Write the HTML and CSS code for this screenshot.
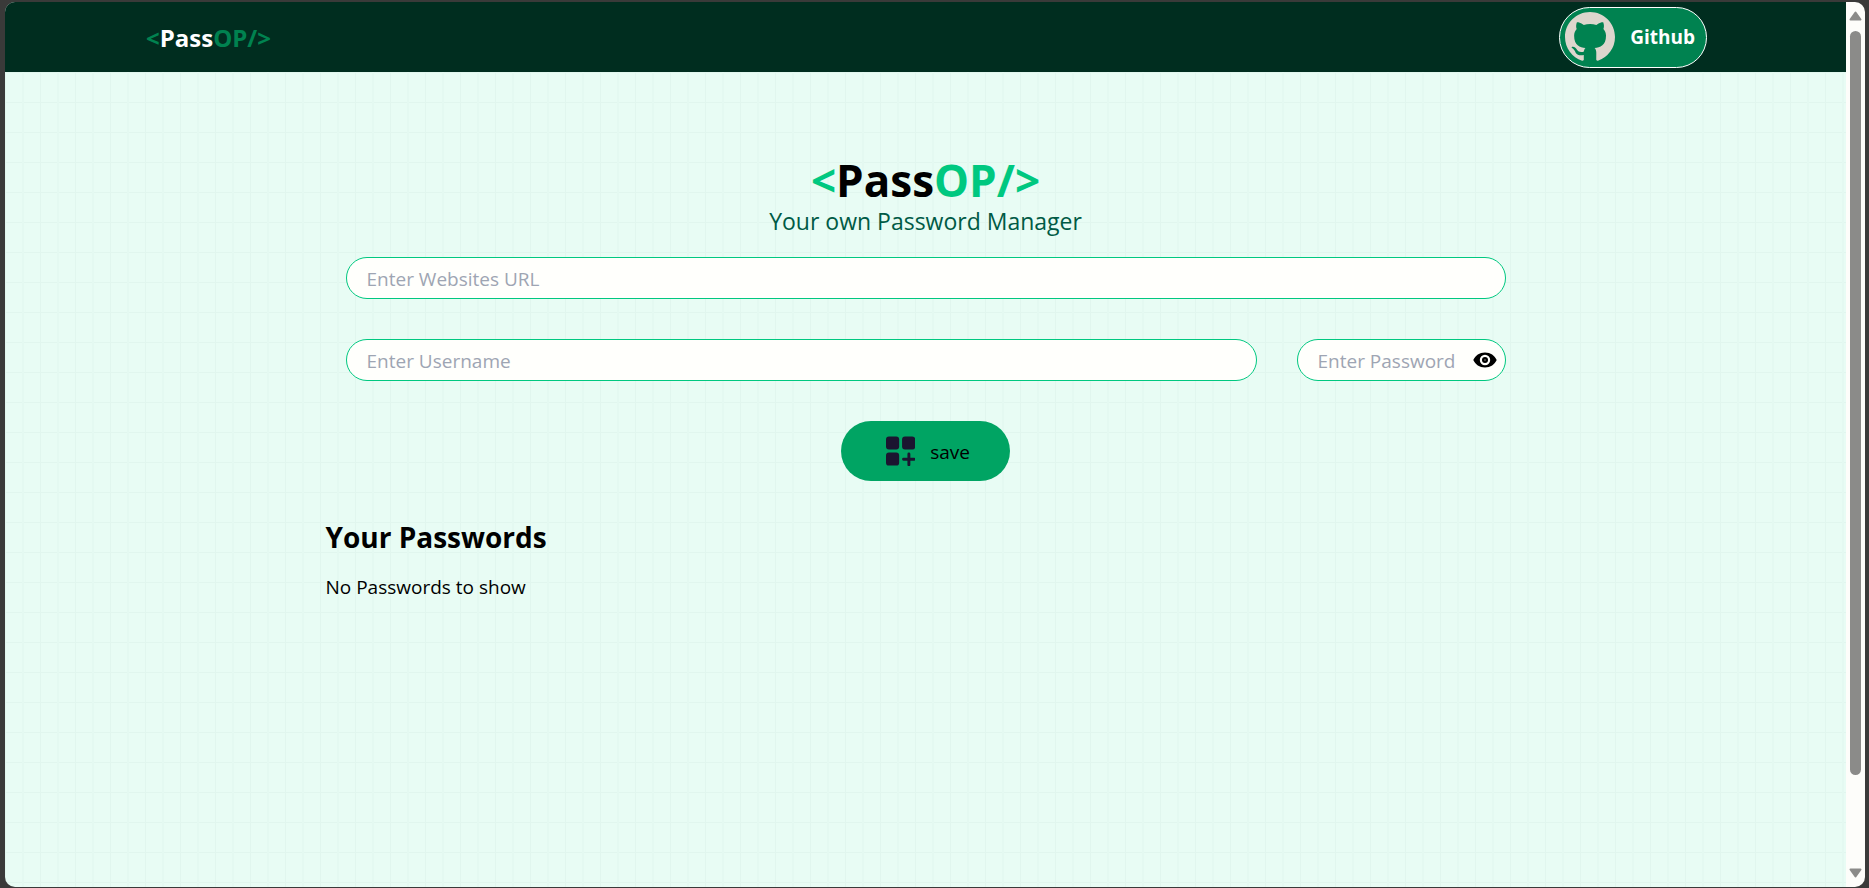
FILE: index.html
```html
<!DOCTYPE html>
<html lang="en">
<head>
<meta charset="utf-8">
<meta name="viewport" content="width=device-width, initial-scale=1">
<title>PassOP</title>
<link rel="stylesheet" href="styles.css">
</head>
<body>
<div class="window">
  <div class="page">
    <nav class="navbar">
      <div class="logo"><span class="accent">&lt;</span>Pass<span class="accent">OP/&gt;</span></div>
      <button class="github" type="button">
        <svg class="github-icon" viewBox="0 0 16 16" aria-hidden="true"><path d="M8 0C3.58 0 0 3.58 0 8c0 3.54 2.29 6.53 5.47 7.59.4.07.55-.17.55-.38 0-.19-.01-.82-.01-1.49-2.01.37-2.53-.49-2.69-.94-.09-.23-.48-.94-.82-1.13-.28-.15-.68-.52-.01-.53.63-.01 1.08.58 1.23.82.72 1.21 1.87.87 2.33.66.07-.52.28-.87.51-1.07-1.78-.2-3.64-.89-3.64-3.95 0-.87.31-1.59.82-2.15-.08-.2-.36-1.02.08-2.12 0 0 .67-.21 2.2.82.64-.18 1.32-.27 2-.27s1.36.09 2 .27c1.53-1.04 2.2-.82 2.2-.82.44 1.1.16 1.92.08 2.12.51.56.82 1.27.82 2.15 0 3.07-1.87 3.75-3.65 3.95.29.25.54.73.54 1.48 0 1.07-.01 1.93-.01 2.2 0 .21.15.46.55.38A8.01 8.01 0 0016 8c0-4.42-3.58-8-8-8z"/></svg>
        <span>Github</span>
      </button>
    </nav>
    <main class="content">
      <h1 class="title"><span class="accent">&lt;</span>Pass<span class="accent">OP/&gt;</span></h1>
      <p class="subtitle">Your own Password Manager</p>
      <form class="form">
        <input class="field" type="text" placeholder="Enter Websites URL" aria-label="Website URL">
        <div class="row">
          <input class="field" type="text" placeholder="Enter Username" aria-label="Username">
          <div class="password">
            <input class="field" type="password" placeholder="Enter Password" aria-label="Password">
            <button class="toggle" type="button" aria-label="Show password">
              <svg viewBox="0 0 24 16" aria-hidden="true"><path fill-rule="evenodd" d="M12 .5C6.500 .5 2.300 3.500 .3 8c2 4.500 6.200 7.500 11.700 7.500S21.700 12.500 23.700 8C21.700 3.500 17.500 .5 12 .5zM12 2.800a5.200 5.200 0 1 1 0 10.400a5.200 5.200 0 0 1 0-10.400z"/><circle cx="12" cy="8" r="3"/><circle cx="12" cy="8" r="0.700" fill="#aaa"/></svg>
            </button>
          </div>
        </div>
        <button class="save" type="button">
          <svg class="save-icon" viewBox="0 0 30 30" aria-hidden="true"><rect width="13.500" height="13.500" rx="3"/><rect x="16.500" width="13.500" height="13.500" rx="3"/><rect y="16.500" width="13.500" height="13.500" rx="3"/><path d="M23.500 18v11M18 23.500h11" stroke-width="3" stroke-linecap="round"/></svg>
          <span>save</span>
        </button>
      </form>
      <section>
        <h2 class="heading">Your Passwords</h2>
        <p class="empty">No Passwords to show</p>
      </section>
    </main>
  </div>
  <div class="scrollbar" aria-hidden="true">
    <svg class="arrow" viewBox="0 0 13 10"><path d="M6.500 1.500L11.500 8.500h-10z"/></svg>
    <div class="track"><div class="thumb"></div></div>
    <svg class="arrow" viewBox="0 0 13 10"><path d="M6.500 8.500L11.500 1.500h-10z"/></svg>
  </div>
</div>
</body>
</html>
```
FILE: styles.css
```css
* { box-sizing: border-box; }

body {
  margin: 0;
  background: #3a3a39;
  color: #000;
  font: 19px/30px "Open Sans", "Noto Sans", sans-serif;
}

button, input { font: inherit; }
h1, h2, p { margin: 0; }

.window {
  display: grid;
  grid-template-columns: 1fr 19px;
  height: 100vh;
  padding: 2px 4px 1px 5px;
}

.page {
  overflow: hidden;
  border-radius: 10px 0 0 10px;
  background-color: #e8fcf4;
  background-image:
    linear-gradient(to right, #e1f6ee 1px, transparent 1px, transparent 17px, #e4f9f1 17px, #e4f9f1 19px, transparent 19px),
    linear-gradient(to bottom, #e1f6ee 1px, transparent 1px);
  background-size: 35px 30px;
  background-position: 0 10px;
}

.navbar {
  display: flex;
  align-items: center;
  justify-content: space-between;
  height: 70px;
  padding: 0 139px 0 141px;
  background: #002d1f;
}

.logo {
  padding-top: 2px;
  color: #fff;
  font-size: 24px;
  font-weight: 700;
}

.logo .accent { color: #008250; }

.github {
  display: flex;
  align-items: center;
  gap: 15px;
  height: 61px;
  padding: 0 11px 0 5px;
  border: 1px solid #fff;
  border-radius: 31px;
  background: #008250;
  color: #fff;
  font-weight: 700;
}

.github-icon {
  width: 50px;
  height: 50px;
  fill: #ddd6cd;
}

.content {
  max-width: 1200px;
  margin: 0 auto;
  padding-top: 80px;
}

.title {
  font-size: 44px;
  line-height: 56px;
  text-align: center;
}

.title .accent { color: #00c880; }

.subtitle {
  color: #005a45;
  font-size: 23px;
  line-height: 26px;
  text-align: center;
}

.form {
  display: flex;
  flex-direction: column;
  align-items: center;
  gap: 40px;
  padding: 23px 20px 0;
}

.row {
  display: flex;
  gap: 40px;
  width: 100%;
}

.field {
  width: 100%;
  height: 42px;
  padding: 2px 20px 0;
  border: 1px solid #00c880;
  border-radius: 21px;
  background: #fffffc;
}

.field::placeholder { color: #9ea5b3; opacity: 1; }

.password {
  position: relative;
  flex: 0 0 209px;
}

.password .field { padding-right: 40px; }

.toggle {
  position: absolute;
  top: 8px;
  right: 9px;
  display: grid;
  place-items: center;
  width: 24px;
  height: 26px;
  padding: 0;
  border: 0;
  background: none;
}

.toggle svg { width: 24px; height: 16px; }

.save {
  display: flex;
  align-items: center;
  gap: 15px;
  width: 169px;
  height: 60px;
  padding: 0 40px 0 45px;
  border: 0;
  border-radius: 30px;
  background: #00a463;
  color: #000;
}

.save span { padding-top: 2px; }

.save-icon {
  width: 30px;
  height: 30px;
  fill: #1b1530;
  stroke: #1b1530;
  stroke-width: 0;
}

.heading {
  padding-top: 36px;
  font-size: 28px;
  line-height: 40px;
}

.empty { padding-top: 15px; }

.scrollbar {
  display: flex;
  flex-direction: column;
  align-items: center;
  padding: 9px 0;
  border-radius: 0 10px 10px 0;
  background: #fdfdfa;
}

.arrow {
  width: 13px;
  height: 10px;
  fill: #8b8b89;
  stroke: #8b8b89;
  stroke-width: 2;
  stroke-linejoin: round;
}

.track {
  flex: 1;
  padding: 10px 0;
}

.thumb {
  width: 11px;
  height: 90%;
  border-radius: 6px;
  background: #8b8b89;
}
```
